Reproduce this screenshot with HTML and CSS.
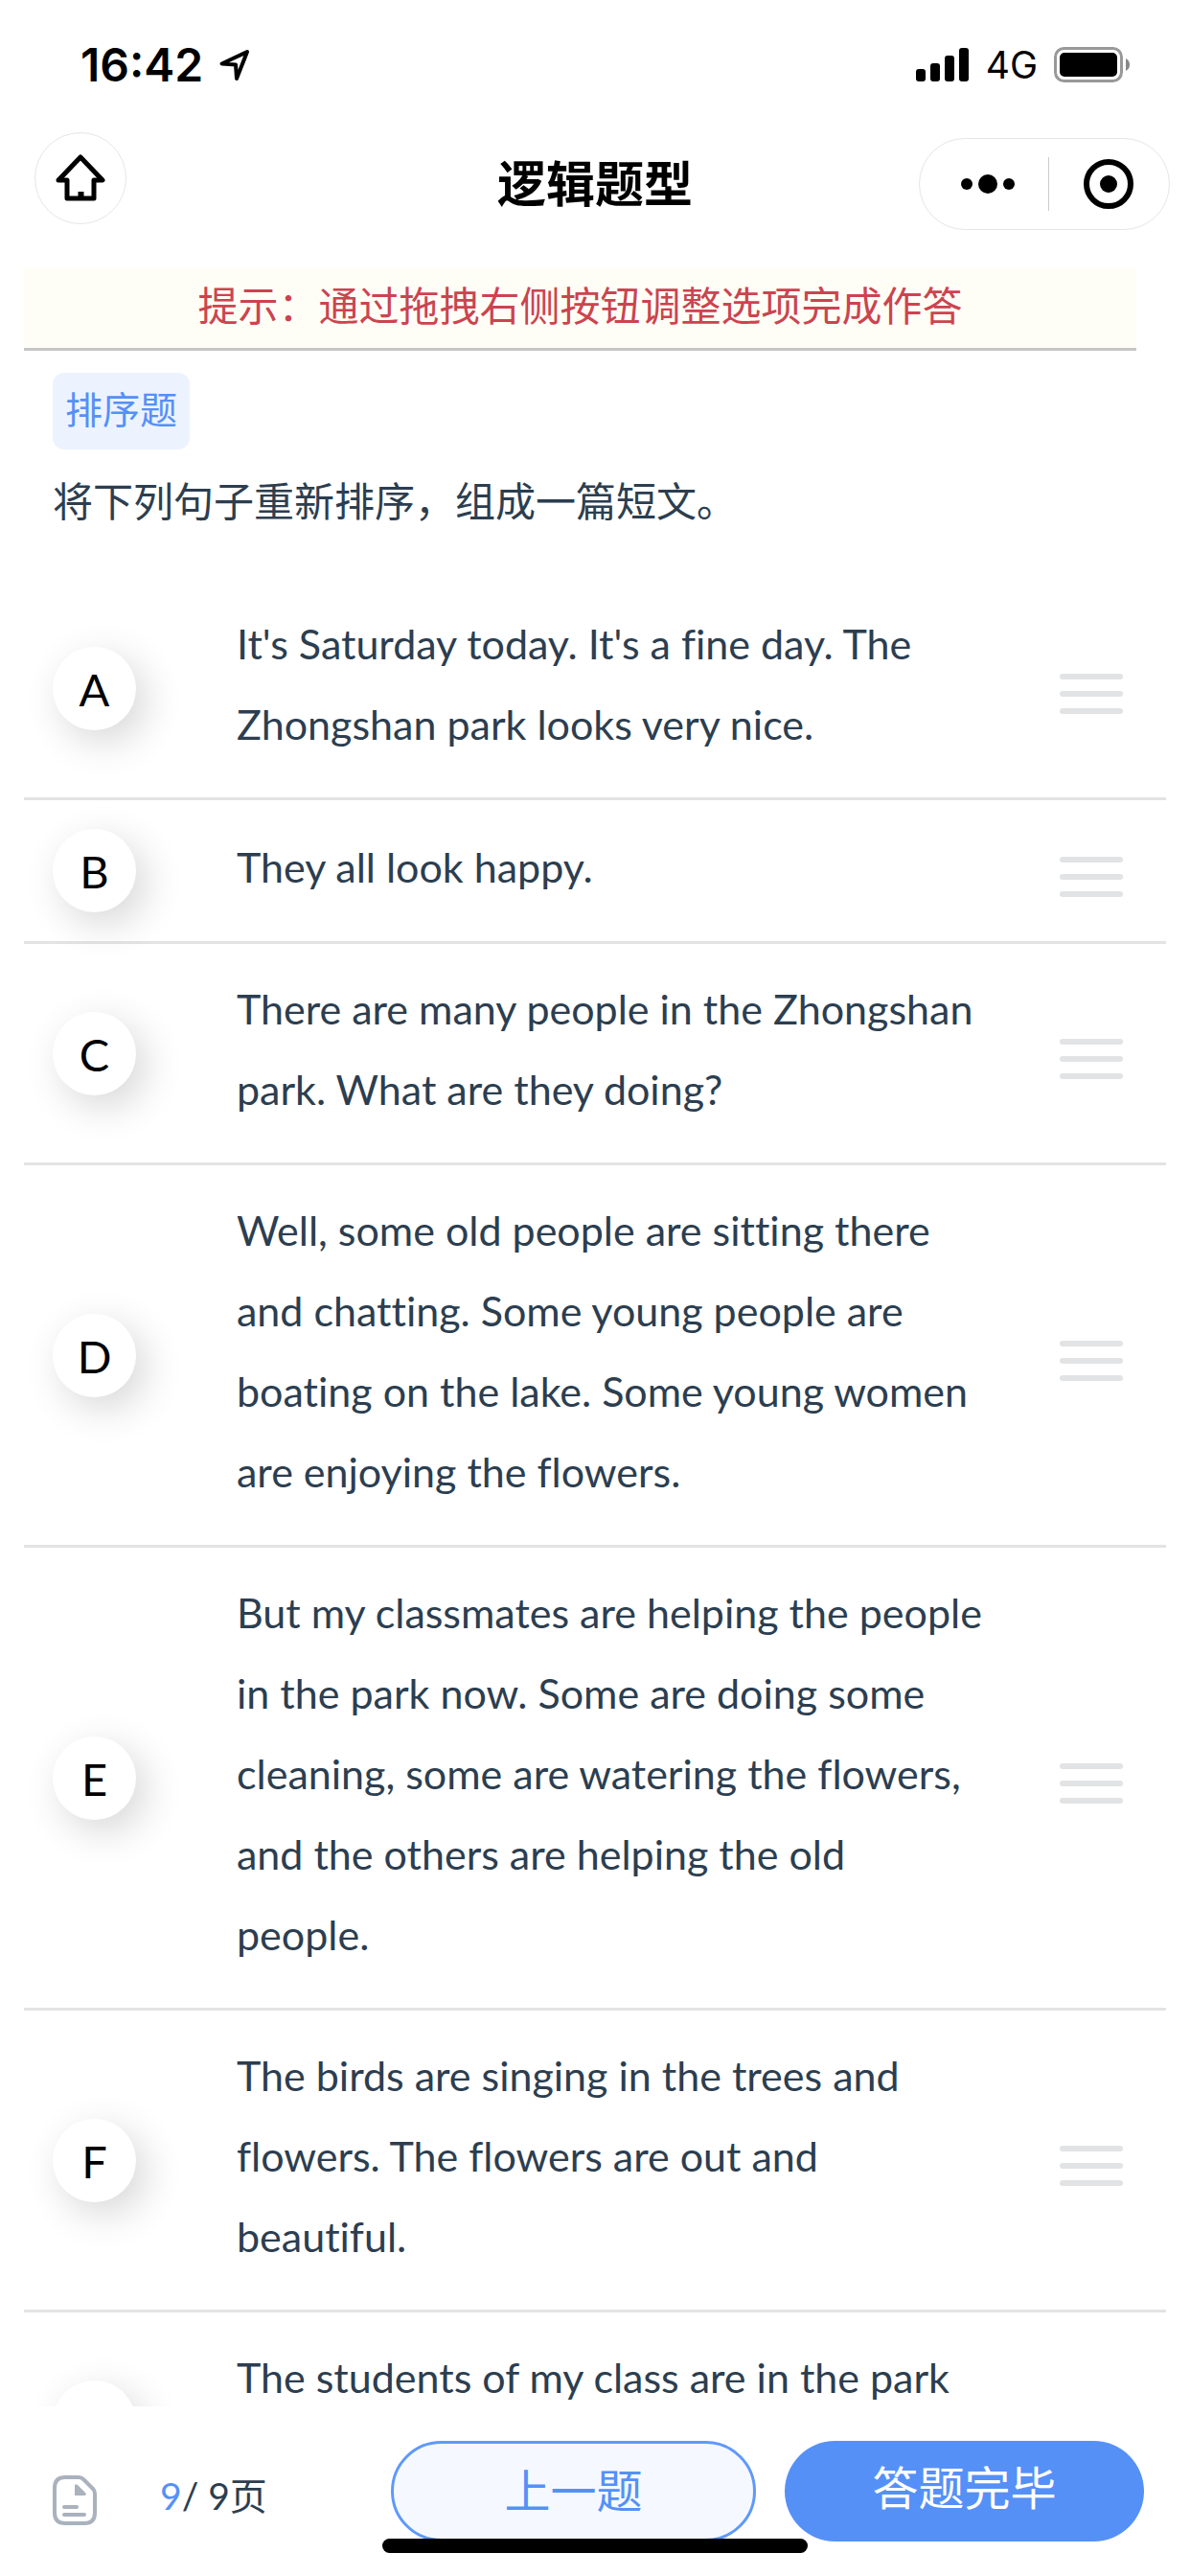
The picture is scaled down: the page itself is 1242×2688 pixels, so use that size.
FILE: index.html
```html
<!DOCTYPE html>
<html lang="zh-CN">
<head>
<meta charset="utf-8">
<meta name="viewport" content="width=device-width, initial-scale=1">
<title>逻辑题型</title>
<link rel="stylesheet" href="styles.css">
</head>
<body>
<div class="statusbar">
  <div class="status-group">
    <span class="clock">16:42</span>
    <svg class="location" viewBox="0 0 32 34" width="32" height="34" aria-hidden="true"><path d="M2.500 15.500L29 3L18 31L17 16.500Z" fill="none" stroke="#000" stroke-width="4" stroke-linejoin="round"/></svg>
  </div>
  <div class="status-group">
    <svg viewBox="0 0 56 36" width="56" height="36" aria-hidden="true"><rect x="0" y="22" width="10" height="13" rx="3"/><rect x="15" y="16" width="10" height="19" rx="3"/><rect x="30" y="8" width="10" height="27" rx="3"/><rect x="45" y="0" width="10" height="35" rx="3"/></svg>
    <span class="network">4G</span>
    <svg viewBox="0 0 80 38" width="80" height="38" aria-hidden="true"><rect x="1.500" y="1.500" width="69" height="34" rx="9" fill="none" stroke="#999" stroke-width="3"/><rect x="6" y="6" width="60" height="25" rx="5"/><path d="M75 12q4 2 4 6.500t-4 6.500z" fill="#888"/></svg>
  </div>
</div>
<header class="navbar">
  <button class="home" type="button" aria-label="首页">
    <svg viewBox="0 0 54 50" width="54" height="50" aria-hidden="true"><path d="M27 3L50 27H41V46H13V27H4Z" fill="none" stroke="#000" stroke-width="5" stroke-linejoin="round"/><path d="M24.500 39h6v7h-6z"/></svg>
  </button>
  <h1 class="title">逻辑题型</h1>
  <div class="capsule">
    <button class="capsule-btn" type="button" aria-label="更多"><svg viewBox="0 0 56 20" width="56" height="20" aria-hidden="true"><circle cx="6" cy="10" r="6"/><circle cx="28" cy="10" r="10"/><circle cx="50" cy="10" r="6"/></svg></button>
    <button class="capsule-btn" type="button" aria-label="关闭"><svg viewBox="0 0 52 52" width="52" height="52" aria-hidden="true"><circle cx="26" cy="26" r="23" fill="none" stroke="#000" stroke-width="6"/><circle cx="26" cy="26" r="9"/></svg></button>
  </div>
</header>
<main class="content">
  <p class="hint">提示：通过拖拽右侧按钮调整选项完成作答</p>
  <section class="question">
    <span class="tag">排序题</span>
    <p class="prompt">将下列句子重新排序，组成一篇短文。</p>
  </section>
  <ul class="options">
    <li class="option"><span class="letter">A</span><p class="text">It's Saturday today. It's a fine day. The<br>Zhongshan park looks very nice.</p><button class="handle" type="button" aria-label="拖拽 A"><i></i><i></i><i></i></button></li>
    <li class="option"><span class="letter">B</span><p class="text">They all look happy.</p><button class="handle" type="button" aria-label="拖拽 B"><i></i><i></i><i></i></button></li>
    <li class="option"><span class="letter">C</span><p class="text">There are many people in the Zhongshan<br>park. What are they doing?</p><button class="handle" type="button" aria-label="拖拽 C"><i></i><i></i><i></i></button></li>
    <li class="option"><span class="letter">D</span><p class="text">Well, some old people are sitting there<br>and chatting. Some young people are<br>boating on the lake. Some young women<br>are enjoying the flowers.</p><button class="handle" type="button" aria-label="拖拽 D"><i></i><i></i><i></i></button></li>
    <li class="option"><span class="letter">E</span><p class="text">But my classmates are helping the people<br>in the park now. Some are doing some<br>cleaning, some are watering the flowers,<br>and the others are helping the old<br>people.</p><button class="handle" type="button" aria-label="拖拽 E"><i></i><i></i><i></i></button></li>
    <li class="option"><span class="letter">F</span><p class="text">The birds are singing in the trees and<br>flowers. The flowers are out and<br>beautiful.</p><button class="handle" type="button" aria-label="拖拽 F"><i></i><i></i><i></i></button></li>
    <li class="option"><span class="letter">G</span><p class="text text-tall">The students of my class are in the park</p><button class="handle" type="button" aria-label="拖拽 G"><i></i><i></i><i></i></button></li>
  </ul>
</main>
<footer class="footer">
  <button class="sheet" type="button" aria-label="答题卡"><svg viewBox="0 0 46 52" width="46" height="52" aria-hidden="true"><path d="M13 2H27Q30 2 32 4L42 14Q44 16 44 19V39Q44 50 33 50H13Q2 50 2 39V13Q2 2 13 2Z" fill="none" stroke="#a9b2bd" stroke-width="4"/><path d="M23 11Q23 8 26 10L34 18Q36 21 33 21H23Z" fill="#a9b2bd"/><path d="M12 33H25M12 41H33" stroke="#a9b2bd" stroke-width="4" stroke-linecap="round"/></svg></button>
  <p class="pager"><span class="current">9</span>/ 9页</p>
  <button class="btn btn-prev" type="button">上一题</button>
  <button class="btn btn-done" type="button">答题完毕</button>
</footer>
<div class="home-indicator"></div>
</body>
</html>
```
FILE: styles.css
```css
* { box-sizing: border-box; margin: 0; padding: 0; }

body {
  display: flex;
  flex-direction: column;
  height: 100vh;
  position: relative;
  overflow: hidden;
  background: #fff;
  color: #2c3e50;
  font-family: Lato, "Noto Sans CJK SC", sans-serif;
  font-size: 42px;
  line-height: 84px;
}

button { border: 0; background: none; font: inherit; color: inherit; cursor: pointer; }
svg { display: block; flex: none; }

/* Status bar */
.statusbar {
  display: flex;
  justify-content: space-between;
  align-items: center;
  height: 136px;
  padding: 0 62px 0 84px;
  color: #000;
  font-family: Inter, sans-serif;
  line-height: 56px;
}
.status-group { display: flex; align-items: center; gap: 17px; }
.clock { font-size: 48px; font-weight: 600; }
.network { font-size: 39px; }

/* Navigation bar */
.navbar {
  display: grid;
  grid-template-columns: 1fr auto 1fr;
  align-items: center;
  height: 143px;
  padding: 0 21px 31px;
  color: #000;
}
.home {
  display: flex;
  align-items: center;
  justify-content: center;
  width: 96px;
  height: 96px;
  margin: 0 0 12px 15px;
  border: 1px solid #e6e6e6;
  border-radius: 50%;
}
.title { font-size: 51px; font-weight: 700; line-height: 72px; }
.capsule {
  display: flex;
  justify-self: end;
  align-items: center;
  width: 262px;
  height: 96px;
  border: 1px solid #e6e6e6;
  border-radius: 48px;
}
.capsule-btn { display: flex; flex: 1; align-items: center; justify-content: center; height: 56px; }
.capsule-btn:first-child { padding-left: 8px; }
.capsule-btn + .capsule-btn { border-left: 1px solid #ccc; }

/* Scrolling content */
.content {
  flex: 1;
  min-height: 0;
  overflow: hidden auto;
  scrollbar-width: none;
  padding: 0 25px;
}
.hint {
  margin-right: 31px;
  padding-bottom: 4px;
  border-bottom: 3px solid #c6c6c6;
  background: #fffef6;
  color: #cb4450;
  line-height: 80px;
  text-align: center;
  white-space: nowrap;
}
.question { padding: 23px 30px 39px; }
.tag {
  display: block;
  width: fit-content;
  padding: 0 13px 4px;
  border-radius: 12px;
  background: #ecf3ff;
  color: #5590f7;
  font-size: 39px;
  line-height: 76px;
}
.prompt { margin-top: 12px; }

.options { list-style: none; }
.option {
  display: flex;
  align-items: center;
  padding: 30px 45px 30px 30px;
  border-bottom: 3px solid #e3e3e3;
}
.letter {
  flex: none;
  width: 87px;
  height: 87px;
  border-radius: 50%;
  background: #fff;
  box-shadow: 10px 12px 40px rgba(0, 0, 0, .16);
  color: #000;
  font-size: 47px;
  line-height: 88px;
  text-align: center;
}
.text {
  flex: 1;
  margin: -4px 50px 4px 105px;
  font-size: 43px;
  font-variant-ligatures: none;
}
.text-tall { min-height: 168px; }
.handle {
  display: flex;
  flex-direction: column;
  flex: none;
  gap: 12px;
  width: 66px;
  margin: 12px 0 0;
}
.handle i { height: 6px; border-radius: 3px; background: #e2e3e5; }

/* Footer */
.footer {
  display: flex;
  align-items: center;
  height: 177px;
  padding: 36px 48px 36px 55px;
}
.sheet { margin-top: 18px; }
.pager { flex: 1; margin: 8px 0 0 66px; font-size: 39px; white-space: nowrap; }
.current { color: #5590f7; }
.btn { height: 105px; border-radius: 53px; font-size: 48px; line-height: 96px; }
.btn-prev {
  width: 381px;
  margin-right: 30px;
  padding-bottom: 2px;
  border: 3px solid #5f99fa;
  background: #f5f9ff;
  color: #5590f7;
}
.btn-done { width: 375px; padding-bottom: 8px; background: #5590f7; color: #fff; }

.home-indicator {
  position: absolute;
  bottom: 24px;
  left: 50%;
  width: 444px;
  height: 15px;
  margin-left: -222px;
  border-radius: 8px;
  background: #000;
}
```
